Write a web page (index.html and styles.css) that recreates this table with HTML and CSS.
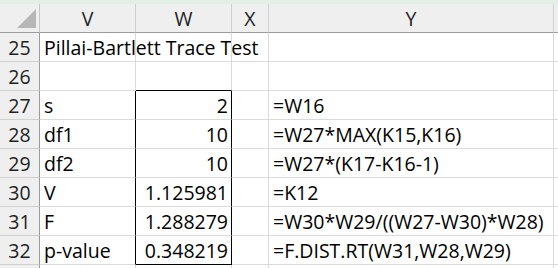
FILE: index.html
```html
<!DOCTYPE html>
<html lang="en">
<head>
    <meta charset="UTF-8">
    <title>Pillai-Bartlett Trace Test</title>
    <link rel="stylesheet" href="styles.css">
</head>
<body>
    <div class="ribbon-edge"></div>
    <div class="sheet">
        <!-- column headers -->
        <div class="corner"><span class="corner-mark"></span></div>
        <div class="col-head">V</div>
        <div class="col-head">W</div>
        <div class="col-head">X</div>
        <div class="col-head">Y</div>
        <div class="col-head last"></div>

        <div class="row-head">25</div>
        <div class="cell">Pillai-Bartlett Trace Test</div>
        <div class="cell"></div>
        <div class="cell"></div>
        <div class="cell"></div>
        <div class="cell"></div>

        <div class="row-head">26</div>
        <div class="cell"></div>
        <div class="cell box-top"></div>
        <div class="cell"></div>
        <div class="cell"></div>
        <div class="cell"></div>

        <div class="row-head">27</div>
        <div class="cell box-left">s</div>
        <div class="cell num box-right">2</div>
        <div class="cell"></div>
        <div class="cell">=W16</div>
        <div class="cell"></div>

        <div class="row-head">28</div>
        <div class="cell box-left">df1</div>
        <div class="cell num box-right">10</div>
        <div class="cell"></div>
        <div class="cell">=W27*MAX(K15,K16)</div>
        <div class="cell"></div>

        <div class="row-head">29</div>
        <div class="cell box-left">df2</div>
        <div class="cell num box-right">10</div>
        <div class="cell"></div>
        <div class="cell">=W27*(K17-K16-1)</div>
        <div class="cell"></div>

        <div class="row-head">30</div>
        <div class="cell box-left">V</div>
        <div class="cell num box-right">1.125981</div>
        <div class="cell"></div>
        <div class="cell">=K12</div>
        <div class="cell"></div>

        <div class="row-head">31</div>
        <div class="cell box-left">F</div>
        <div class="cell num box-right">1.288279</div>
        <div class="cell"></div>
        <div class="cell">=W30*W29/((W27-W30)*W28)</div>
        <div class="cell"></div>

        <div class="row-head">32</div>
        <div class="cell box-left">p-value</div>
        <div class="cell num box-right box-bottom">0.348219</div>
        <div class="cell"></div>
        <div class="cell">=F.DIST.RT(W31,W28,W29)</div>
        <div class="cell"></div>

        <div class="row-head stub"></div>
        <div class="cell stub"></div>
        <div class="cell stub"></div>
        <div class="cell stub"></div>
        <div class="cell stub"></div>
        <div class="cell stub"></div>
    </div>
</body>
</html>
```

FILE: styles.css
```css
body {
    margin: 0;
    background-color: #fff;
    font-family: "Open Sans", "Liberation Sans", sans-serif;
    font-size: 19.5px;
    color: #000;
    overflow: hidden;
}

.ribbon-edge {
    height: 4px;
    background-color: #e3efe6;
}

.sheet {
    display: grid;
    grid-template-columns: 40px 96px 96px 37px 285px 4px;
    grid-template-rows: 29px repeat(8, 29px) 4px;
}

.sheet > div {
    box-sizing: border-box;
    border-right: 1px solid #dadada;
    border-bottom: 1px solid #dadada;
    display: flex;
    align-items: flex-end;
    padding: 0 3px 0 4px;
    line-height: 27px;
    white-space: nowrap;
}

.sheet > .stub {
    border-bottom: none;
}

.corner,
.col-head {
    background-color: #efefef;
}

.sheet > .corner {
    border-right: 1px solid #c8c8c8;
    border-bottom: 1px solid #9b9b9b;
    position: relative;
}

.corner-mark {
    position: absolute;
    right: 3px;
    bottom: 4px;
    width: 0;
    height: 0;
    border-left: 19px solid transparent;
    border-bottom: 19px solid #b7b7b7;
}

.sheet > .col-head {
    justify-content: center;
    border-right: 1px solid #d0d0d0;
    border-bottom: 1px solid #9b9b9b;
    color: #1f1f1f;
    padding: 0;
}

.sheet > .col-head.last {
    border-right: none;
}

.sheet > .row-head {
    background-color: #efefef;
    justify-content: center;
    color: #1f1f1f;
    border-right: 1px solid #9b9b9b;
    border-bottom: 1px solid #d0d0d0;
    padding: 0;
}

.sheet > .num {
    justify-content: flex-end;
}

/* outline around W27:W32 */
.sheet > .box-top {
    border-bottom: 1px solid #000;
}

.sheet > .box-left {
    border-right: 1px solid #000;
}

.sheet > .box-right {
    border-right: 1px solid #000;
}

.sheet > .box-bottom {
    border-bottom: 1px solid #000;
}
```
